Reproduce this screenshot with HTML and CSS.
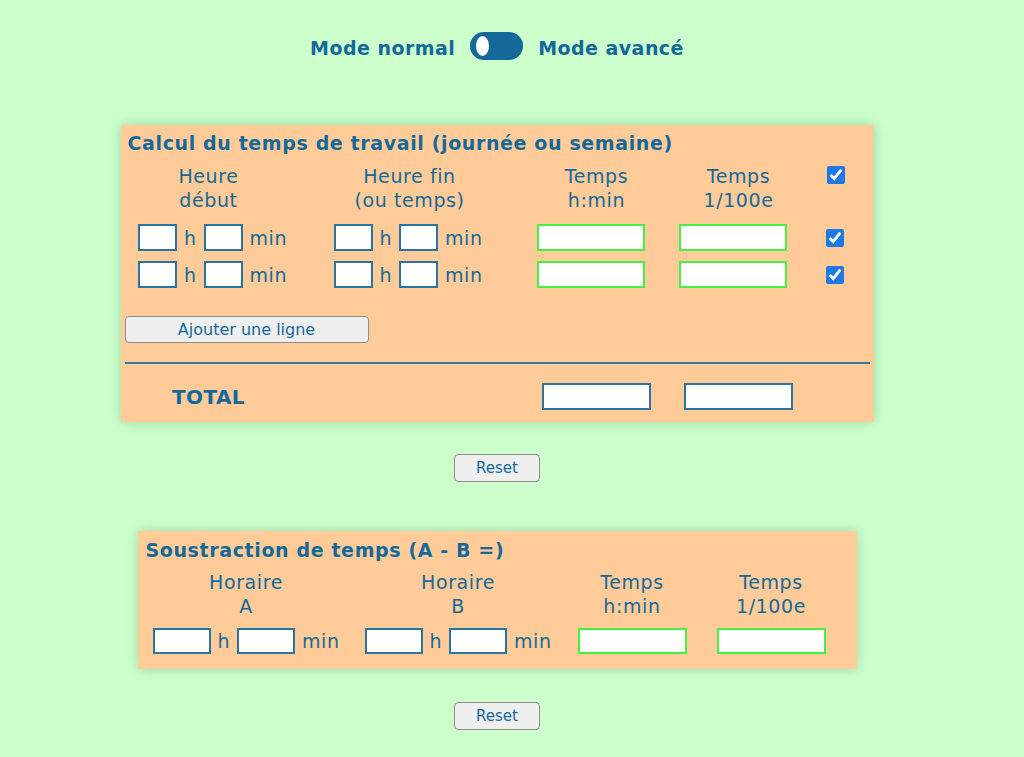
FILE: index.html
```html
<!DOCTYPE html>
<html lang="fr">
<head>
<meta charset="utf-8">
<title>Calcul du temps de travail</title>
<link rel="stylesheet" href="styles.css">
</head>
<body>
<div class="page">
  <div class="mode">
    <span class="mode-label">Mode normal</span>
    <span class="switch"><span class="knob"></span></span>
    <span class="mode-label">Mode avancé</span>
  </div>

  <section class="panel panel-work">
    <h2 class="panel-title">Calcul du temps de travail (journée ou semaine)</h2>
    <div class="work-head">
      <div class="head">Heure<br>début</div>
      <div class="head">Heure fin<br>(ou temps)</div>
      <div class="head">Temps<br>h:min</div>
      <div class="head">Temps<br>1/100e</div>
      <input type="checkbox" class="check check-head" checked>
    </div>
    <div class="work-rows">
      <div class="work-row">
        <div class="hm"><input class="in-small" type="text"><span>h</span><input class="in-small" type="text"><span>min</span></div>
        <div class="hm"><input class="in-small" type="text"><span>h</span><input class="in-small" type="text"><span>min</span></div>
        <input class="in-result" type="text">
        <input class="in-result" type="text">
        <input type="checkbox" class="check" checked>
      </div>
      <div class="work-row">
        <div class="hm"><input class="in-small" type="text"><span>h</span><input class="in-small" type="text"><span>min</span></div>
        <div class="hm"><input class="in-small" type="text"><span>h</span><input class="in-small" type="text"><span>min</span></div>
        <input class="in-result" type="text">
        <input class="in-result" type="text">
        <input type="checkbox" class="check" checked>
      </div>
    </div>
    <button class="btn btn-add" type="button">Ajouter une ligne</button>
    <hr class="sep">
    <div class="work-total">
      <div class="total-label">TOTAL</div>
      <div></div>
      <input class="in-total" type="text">
      <input class="in-total" type="text">
    </div>
  </section>

  <div class="reset-wrap"><button class="btn btn-reset" type="button">Reset</button></div>

  <section class="panel panel-sub">
    <h2 class="panel-title">Soustraction de temps (A - B =)</h2>
    <div class="sub-grid">
      <div class="head">Horaire<br>A</div>
      <div class="head">Horaire<br>B</div>
      <div class="head">Temps<br>h:min</div>
      <div class="head">Temps<br>1/100e</div>
    </div>
    <div class="sub-grid sub-row">
      <div class="hm"><input class="in-wide" type="text"><span>h</span><input class="in-wide" type="text"><span>min</span></div>
      <div class="hm"><input class="in-wide" type="text"><span>h</span><input class="in-wide" type="text"><span>min</span></div>
      <input class="in-result in-result-sub" type="text">
      <input class="in-result in-result-sub" type="text">
    </div>
  </section>

  <div class="reset-wrap reset-2"><button class="btn btn-reset" type="button">Reset</button></div>
</div>
</body>
</html>
```

FILE: styles.css
```css
* {
  box-sizing: border-box;
}

html, body {
  margin: 0;
  padding: 0;
  background: #ccffcc;
}

body {
  font-family: "DejaVu Sans", Verdana, sans-serif;
  color: #15689a;
  height: 757px;
  overflow: hidden;
}

.page {
  width: 994px;
  display: flex;
  flex-direction: column;
  align-items: center;
}

/* Mode switch */
.mode {
  margin-top: 32px;
  height: 28px;
  display: flex;
  align-items: center;
  gap: 15px;
}

.mode-label {
  font-size: 19px;
  font-weight: bold;
  line-height: 24px;
  letter-spacing: 0.45px;
  padding-top: 4px;
}

.switch {
  width: 53px;
  height: 28px;
  border-radius: 14px;
  background: #14689a;
  display: flex;
  align-items: center;
  padding-left: 6px;
}

.knob {
  width: 13px;
  height: 20px;
  border-radius: 50%;
  background: #ffffff;
}

/* Panels */
.panel {
  background: #ffcc99;
  box-shadow: 0 0 12px rgba(40, 110, 40, 0.28);
}

.panel-title {
  margin: 0;
  font-size: 19px;
  font-weight: bold;
  line-height: 24px;
  letter-spacing: 0.62px;
}

.panel-work {
  width: 753px;
  margin-top: 65px;
  padding: 6px 4px 12px;
}

.panel-work .panel-title {
  padding-left: 3px;
}

.head {
  font-size: 19px;
  line-height: 24px;
  letter-spacing: 0.6px;
  text-align: center;
}

.work-head,
.work-total {
  display: grid;
  grid-template-columns: 168px 234px 140px 144px 51px;
  justify-items: center;
}

.work-head {
  margin-top: 9px;
  align-items: start;
}

.check {
  width: 18px;
  height: 18px;
  margin: 0;
  accent-color: #1f78e6;
}

.check-head {
  margin-top: 2px;
}

.work-rows {
  margin-top: 12px;
  display: flex;
  flex-direction: column;
  gap: 10px;
}

.work-row {
  display: grid;
  grid-template-columns: 176px 215px 151px 132px 73px;
  justify-items: center;
  align-items: center;
  height: 27px;
}

.hm {
  display: flex;
  align-items: center;
  gap: 7px;
  font-size: 19px;
  line-height: 24px;
  letter-spacing: 0.5px;
}

input[type="text"] {
  margin: 0;
  padding: 0;
  background: #ffffff;
  font: inherit;
  outline: none;
}

.in-small {
  width: 39px;
  height: 27px;
  border: 2px solid #2a74a3;
}

.in-wide {
  width: 58px;
  height: 26px;
  border: 2px solid #2a74a3;
}

.in-result {
  width: 108px;
  height: 27px;
  border: 2px solid #44f044;
}

.in-result-sub {
  width: 109px;
  height: 26px;
}

.in-total {
  width: 109px;
  height: 27px;
  border: 2px solid #2a74a3;
}

.btn {
  background: #efefef;
  border: 1.5px solid #8c8c8c;
  border-radius: 4px;
  color: #15689a;
  font-family: "DejaVu Sans", Verdana, sans-serif;
  padding: 0;
  margin: 0;
}

.btn-add {
  margin-top: 28px;
  width: 244px;
  height: 27px;
  font-size: 16px;
}

.sep {
  margin: 19px 0 0;
  border: 0;
  border-top: 2px solid #2f78a6;
  height: 0;
}

.work-total {
  margin-top: 19px;
  align-items: center;
  height: 27px;
}

.total-label {
  font-size: 20px;
  font-weight: bold;
  line-height: 24px;
  letter-spacing: 0.4px;
}

.reset-wrap {
  margin-top: 32px;
  display: flex;
  justify-content: center;
}

.btn-reset {
  width: 86px;
  height: 28px;
  font-size: 15px;
}

.panel-sub {
  width: 719px;
  margin-top: 49px;
  padding: 7px 9px 15px 8px;
}

.sub-grid {
  display: grid;
  grid-template-columns: 201px 223px 125px 153px;
  justify-items: center;
  margin-top: 8px;
}

.sub-row {
  margin-top: 10px;
  align-items: center;
  height: 26px;
}

.reset-2 {
  margin-top: 33px;
}
```
